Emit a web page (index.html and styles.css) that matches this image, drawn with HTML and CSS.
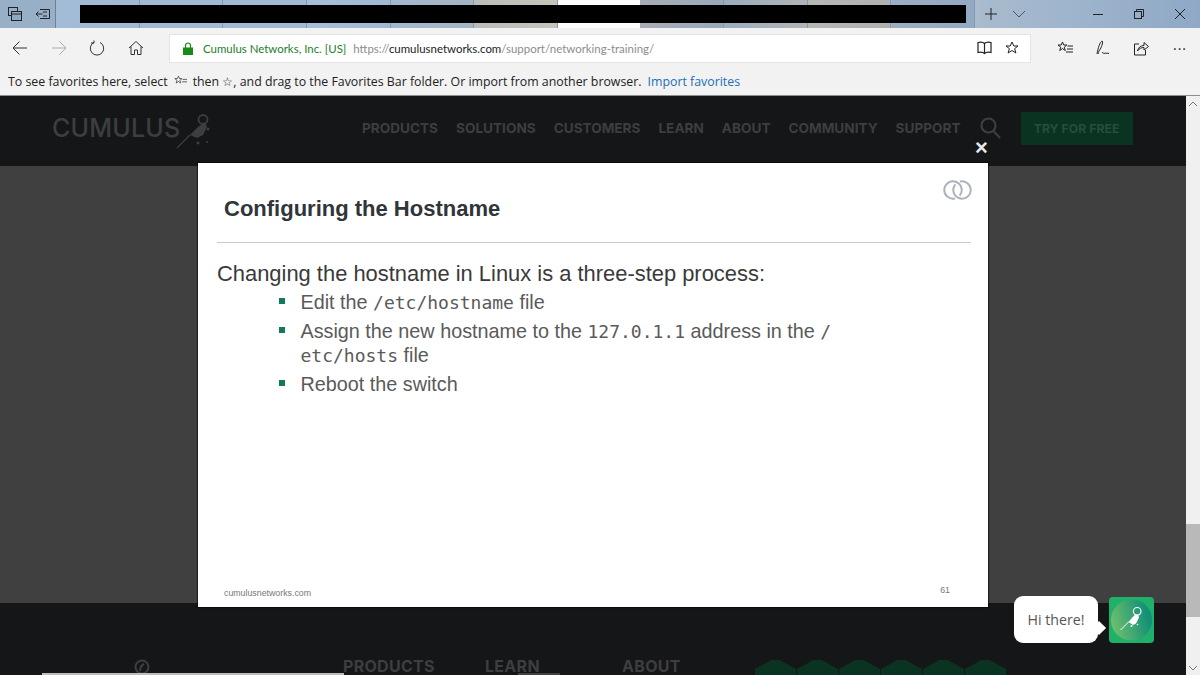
FILE: index.html
```html
<!DOCTYPE html>
<html lang="en">
<head>
    <meta charset="UTF-8">
    <title>Configuring the Hostname - Cumulus Networks</title>
    <link rel="stylesheet" href="styles.css">
</head>
<body>
    <div class="tabbar">
        <div class="tab-tools">
            <svg width="16" height="16" viewBox="0 0 16 16" fill="none" stroke="#222"><rect x="1.500" y="1.500" width="9" height="8"/><rect x="4.500" y="5.500" width="10" height="9" fill="#8fa9c4"/><path d="M4.500 8h10"/></svg>
            <svg width="16" height="16" viewBox="0 0 16 16" fill="none" stroke="#222"><path d="M5 3.500h9.500v9H5M7.500 8H1M3.500 5.500 1 8l2.500 2.500M8 6h4M8 10h4"/></svg>
        </div>
        <div class="tabs">
            <div class="tab t1"></div>
            <div class="tab t2"></div>
            <div class="tab t3"></div>
            <div class="tab t4"></div>
            <div class="tab t5"></div>
            <div class="tab t6"></div>
            <div class="tab t7"></div>
            <div class="tab t8"></div>
            <div class="tab t9"></div>
            <div class="tab t10"></div>
            <div class="tab t11"></div>
        </div>
        <div class="tab-end">
            <svg class="plus" width="14" height="14" viewBox="0 0 14 14" stroke="#222" fill="none"><path d="M7 1v12M1 7h12"/></svg>
            <svg class="chev" width="14" height="10" viewBox="0 0 14 10" stroke="#555" fill="none"><path d="M1 2l6 6 6-6"/></svg>
            <svg class="win-min" width="10" height="10" viewBox="0 0 10 10" stroke="#222" fill="none"><path d="M0 5.500h10"/></svg>
            <svg class="win-max" width="10" height="10" viewBox="0 0 10 10" stroke="#222" fill="none"><rect x="0.500" y="2.500" width="7" height="7"/><path d="M2.500 2.500v-2h7v7h-2"/></svg>
            <svg class="win-close" width="10" height="10" viewBox="0 0 10 10" stroke="#222" fill="none"><path d="M0 0l10 10M10 0L0 10"/></svg>
        </div>
        <div class="redact"></div>
    </div>

    <div class="toolbar">
        <svg class="nav-btn" width="16" height="16" viewBox="0 0 16 16" fill="none" stroke="#333"><path d="M15 8H1M7.500 1.500 1 8l6.500 6.500"/></svg>
        <svg class="nav-btn" width="16" height="16" viewBox="0 0 16 16" fill="none" stroke="#aaa"><path d="M1 8h14M8.500 1.500 15 8l-6.500 6.500"/></svg>
        <svg class="nav-btn" width="16" height="16" viewBox="0 0 16 16" fill="none" stroke="#333"><path d="M5 2.400A6.700 6.700 0 1 0 11 2.400M5 0.500v2.500H2"/></svg>
        <svg class="nav-btn home" width="16" height="16" viewBox="0 0 16 16" fill="none" stroke="#333"><path d="M1 8l7-6.500L15 8M3 6.500V14.500h3.500V10h3v4.500H13V6.500"/></svg>
        <div class="addressbar">
            <svg width="10" height="13" viewBox="0 0 10 13"><path d="M2.500 6V3.500a2.500 2.500 0 0 1 5 0V6" fill="none" stroke="#178a17" stroke-width="1.200"/><rect y="5.500" width="10" height="7.500" fill="#178a17"/></svg>
            <span class="cert">Cumulus Networks, Inc. [US]</span>
            <span class="url">https://<b>cumulusnetworks.com</b>/support/networking-training/</span>
            <svg class="book" width="15" height="14" viewBox="0 0 15 14" fill="none" stroke="#222" stroke-width="1.200"><path d="M7.500 2.500C6 1 3 1 1 1.500v10c2-.5 5-.5 6.500 1 1.500-1.500 4.500-1.500 6.500-1v-10c-2-.5-5-.5-6.500 1zM7.500 2.500v10"/></svg>
            <svg class="star" width="14" height="14" viewBox="0 0 14 14" fill="none" stroke="#222"><path d="M7 1l1.800 4h4.200l-3.400 2.700 1.300 4.300L7 9.500 3.100 12l1.300-4.300L1 5h4.200z"/></svg>
        </div>
        <div class="tools">
            <svg width="16" height="14" viewBox="0 0 16 14" fill="none" stroke="#222"><path d="M5.500 1l1.300 3h3l-2.500 2.200 1 3.300-2.800-1.900-2.800 1.900 1-3.300L1 4h3.200zM10.500 5H16M10 8h6M9 11h7"/></svg>
            <svg width="16" height="16" viewBox="0 0 16 16" fill="none" stroke="#222"><path d="M2 14C3 8 5 2 7 1c1.500 0 0 6-3 10-.5.800-1 2-.500 3M7 12c1.500 2.500 4 .5 7 1.500"/></svg>
            <svg width="16" height="15" viewBox="0 0 16 15" fill="none" stroke="#222"><path d="M6 3H1.500v11h11V9M4.500 10C5 6.500 8 4.500 11 4.500V1.500L15.500 5.500 11 9V6.500c-2.500 0-5 1-6.500 3.500z"/></svg>
            <span class="dots">···</span>
        </div>
    </div>

    <div class="favbar">
        <span>To see favorites here, select</span>
        <svg class="fav-a" width="13" height="12" viewBox="0 0 16 14" fill="none" stroke="#444"><path d="M5.500 1l1.300 3h3l-2.500 2.200 1 3.300-2.800-1.900-2.800 1.900 1-3.300L1 4h3.200zM10.500 5H16M10 8h6"/></svg>
        <span>then ☆, and drag to the Favorites Bar folder. Or import from another browser.</span>
        <a class="import">Import favorites</a>
    </div>

    <div class="page">
        <div class="site">
            <header class="site-header">
                <div class="logo">
                    <span>CUMULUS</span>
                    <svg width="38" height="40" viewBox="0 0 38 40" fill="none" stroke="#3d3e40"><circle cx="28" cy="7.500" r="4.500" stroke-width="1.800"/><path d="M2 36 15 23" stroke-width="1.200"/><path d="M15 23 23 15l7-5 2 5-4 8-6 3z" fill="#3d3e40" stroke="none"/><circle cx="33" cy="17" r="1.500" fill="#3d3e40" stroke="none"/><circle cx="23" cy="31" r="1.500" fill="#3d3e40" stroke="none"/><circle cx="32" cy="30" r="1" fill="#3d3e40" stroke="none"/></svg>
                </div>
                <nav class="main-nav">
                    <a>PRODUCTS</a>
                    <a>SOLUTIONS</a>
                    <a>CUSTOMERS</a>
                    <a>LEARN</a>
                    <a>ABOUT</a>
                    <a>COMMUNITY</a>
                    <a>SUPPORT</a>
                </nav>
                <svg class="search" width="21" height="22" viewBox="0 0 21 22" fill="none" stroke="#3d3e40" stroke-width="2.200"><circle cx="8.500" cy="8.500" r="7"/><path d="M13.500 14l6.500 7"/></svg>
                <a class="try-btn">TRY FOR FREE</a>
            </header>
            <div class="band"></div>
            <footer class="site-footer">
                <svg class="foot-logo" width="16" height="16" viewBox="0 0 16 16" fill="none" stroke="#3d3e40" stroke-width="2"><circle cx="8" cy="8" r="6.500"/><path d="M6 12c0-3 2-6 4-7" /></svg>
                <div class="foot-col c1">PRODUCTS</div>
                <div class="foot-col c2">LEARN</div>
                <div class="foot-col c3">ABOUT</div>
                <div class="badges">
                    <i></i><i></i><i></i><i></i><i></i><i></i>
                </div>
                <div class="foot-line"></div>
                <div class="foot-under"></div>
            </footer>
        </div>
        <div class="scrollbar">
            <svg class="arrow-up" width="10" height="6" viewBox="0 0 10 6" fill="none" stroke="#777"><path d="M1 5l4-4 4 4"/></svg>
            <div class="thumb"></div>
            <svg class="arrow-down" width="10" height="6" viewBox="0 0 10 6" fill="none" stroke="#777"><path d="M1 1l4 4 4-4"/></svg>
        </div>

        <span class="modal-close">×</span>
        <div class="slide">
            <svg class="slide-logo" width="29" height="22" viewBox="0 0 29 22" fill="none" stroke="#adb2bd" stroke-width="2"><path d="M12 19.470A8.700 8.700 0 1 1 16.600 16.670"/><path d="M17 2.530A8.700 8.700 0 1 1 12.400 5.330"/></svg>
            <h2>Configuring the Hostname</h2>
            <hr>
            <p class="lead">Changing the hostname in Linux is a three-step process:</p>
            <ul>
                <li>Edit the <code>/etc/hostname</code> file</li>
                <li>Assign the new hostname to the <code>127.0.1.1</code> address in the <code>/</code><br><code>etc/hosts</code> file</li>
                <li>Reboot the switch</li>
            </ul>
            <div class="slide-foot">
                <span>cumulusnetworks.com</span>
                <span class="slide-num">61</span>
            </div>
        </div>

        <div class="chat">
            <div class="bubble">Hi there!</div>
            <div class="chat-btn">
                <svg width="26" height="28" viewBox="0 0 26 28" fill="none" stroke="#fff"><circle cx="18.200" cy="5.300" r="3.800" stroke-width="1.200"/><path d="M1.500 24 10 15.500" stroke-width="1"/><path d="M9.500 16 15 9.500l4-1 1 3-3 6-3 1.500z" fill="#fff" stroke="none"/><circle cx="12.500" cy="20" r="1" fill="#fff" stroke="none"/><circle cx="18.500" cy="18.500" r="0.800" fill="#fff" stroke="none"/></svg>
            </div>
        </div>
    </div>
</body>
</html>
```

FILE: styles.css
```css
html, body {
    margin: 0;
    padding: 0;
}
body {
    width: 1200px;
    height: 675px;
    overflow: hidden;
    background: #f2f2f2;
    font-family: 'Open Sans', sans-serif;
    color: #222;
}

/* tab strip */
.tabbar {
    position: relative;
    display: flex;
    height: 28px;
    background: #98afc8;
}
.tab-tools {
    width: 56px;
    display: flex;
    align-items: center;
    gap: 12px;
    padding-left: 7px;
    box-sizing: border-box;
    border-right: 1px solid #6d8198;
}
.tabs {
    display: flex;
    width: 919px;
}
.tab {
    flex: 1;
    border-right: 1px solid #8499ae;
}
.t1 { background: linear-gradient(90deg, #a3bcd6, #9db9d7); }
.t2 { background: #a0bad6; }
.t3 { background: #a0bad6; }
.t4 { background: linear-gradient(90deg, #a6bfd9, #9fb8d4); }
.t5 { background: linear-gradient(90deg, #a2b8d0, #a6b4c2); }
.t6 { background: linear-gradient(90deg, #b9bdb9, #c6c5bb); }
.t7 { background: #fdfdfd; border-right: 0; }
.t8 { background: linear-gradient(90deg, #a7adb5, #98a8bb); }
.t9 { background: linear-gradient(90deg, #9cacbe, #b0b5b6); }
.t10 { background: linear-gradient(90deg, #b5b8b4, #aeb1ae); }
.t11 { background: linear-gradient(90deg, #9aaec4, #93a8c2); }
.tab-end {
    flex: 1;
    position: relative;
    display: flex;
    align-items: center;
    padding-left: 9px;
    background: linear-gradient(90deg, #a9bbcd, #9fb5cd 40%, #8ea8c6);
}
.chev { margin-left: 14px; }
.win-min { margin-left: 67px; }
.win-max { margin-left: 31px; }
.win-close { margin-left: 31px; }
.redact {
    position: absolute;
    left: 80px;
    top: 5px;
    width: 886px;
    height: 18px;
    background: #000;
}

/* address row */
.toolbar {
    height: 38px;
    display: flex;
    align-items: center;
    box-sizing: border-box;
    padding: 2px 0 0 12px;
}
.nav-btn { margin-right: 22.500px; }
.nav-btn.home { margin-right: 25.500px; }
.addressbar {
    width: 862px;
    height: 29px;
    box-sizing: border-box;
    display: flex;
    align-items: center;
    background: #fff;
    border: 1px solid #e4e4e4;
    padding-left: 13px;
    font-family: 'Lato', sans-serif;
    font-size: 11.450px;
}
.cert {
    color: #1d7d2a;
    margin-left: 10px;
}
.url {
    color: #8c8c8c;
    margin-left: 7px;
    flex: 1;
}
.url b {
    color: #222;
    font-weight: 400;
}
.star { margin: 0 11px 0 13px; }
.tools {
    flex: 1;
    display: flex;
    align-items: center;
    gap: 22px;
    padding-left: 26px;
}
.dots {
    font-size: 14px;
    letter-spacing: 1px;
    margin-left: 2px;
}

/* favorites row */
.favbar {
    height: 29px;
    display: flex;
    align-items: center;
    gap: 6px;
    padding: 1px 0 0 8px;
    box-sizing: border-box;
    font-size: 12.350px;
    color: #222;
    white-space: nowrap;
}
.import { color: #1a6fb5; }

/* site behind the dim layer */
.page {
    position: relative;
    display: flex;
    height: 580px;
    border-top: 1px solid #8d8d8d;
    box-sizing: border-box;
}
.site {
    flex: 1;
    display: flex;
    flex-direction: column;
    font-family: 'Inter', sans-serif;
}
.site-header {
    height: 70px;
    box-sizing: border-box;
    display: flex;
    align-items: center;
    background: #151618;
    padding: 0 0 6px 52px;
    color: #3d3e40;
}
.logo {
    width: 310px;
    display: flex;
    align-items: center;
    font-size: 25px;
    font-weight: 500;
    letter-spacing: 0.200px;
}
.logo svg {
    margin: 8px 0 0 -5px;
}
.main-nav {
    display: flex;
    gap: 18px;
    font-size: 13.600px;
    font-weight: 700;
}
.search { margin-left: 19px; }
.try-btn {
    margin-left: 20px;
    width: 112px;
    height: 33px;
    line-height: 33px;
    text-align: center;
    background: #0b3322;
    color: #21503b;
    font-size: 12.300px;
    font-weight: 700;
}
.band {
    height: 437px;
    background: #404040;
}
.site-footer {
    position: relative;
    flex: 1;
    background: #151618;
    color: #3d3e40;
    font-size: 16px;
    font-weight: 700;
    letter-spacing: 0.300px;
}
.foot-logo {
    position: absolute;
    left: 134px;
    top: 56px;
}
.foot-col {
    position: absolute;
    top: 53px;
}
.c1 { left: 343px; }
.c2 { left: 485px; }
.c3 { left: 622px; }
.badges {
    position: absolute;
    left: 755px;
    top: 57px;
    display: flex;
    gap: 1px;
}
.badges i {
    width: 41px;
    height: 30px;
    background: #0b3322;
    clip-path: polygon(40% 0, 60% 0, 100% 30%, 100% 100%, 0 100%, 0 30%);
}
.foot-line {
    position: absolute;
    left: 42px;
    top: 70px;
    width: 302px;
    height: 2px;
    background: #bdbdbd;
}
.foot-under {
    position: absolute;
    left: 518px;
    top: 70px;
    width: 42px;
    height: 2px;
    background: #404040;
}

/* scrollbar */
.scrollbar {
    position: relative;
    width: 14px;
    background: #f0f0f0;
}
.thumb {
    position: absolute;
    top: 428px;
    left: 0;
    right: 0;
    height: 93px;
    background: #b9b9b9;
}
.arrow-up {
    position: absolute;
    top: 5px;
    left: 2px;
}
.arrow-down {
    position: absolute;
    bottom: 4px;
    left: 2px;
}

/* slide modal */
.modal-close {
    position: absolute;
    left: 975px;
    top: 37px;
    color: #e8e8e8;
    font-family: 'Liberation Sans', sans-serif;
    font-size: 22px;
    font-weight: 700;
    line-height: 30px;
}
.slide {
    position: absolute;
    left: 198px;
    top: 67px;
    width: 790px;
    height: 444px;
    box-sizing: border-box;
    background: #fff;
    padding: 33px 17px 0 19px;
    font-family: 'Liberation Sans', sans-serif;
    box-shadow: 0 0 1px 1px rgba(0, 0, 0, 0.5);
}
.slide-logo {
    position: absolute;
    top: 16px;
    right: 16px;
}
.slide h2 {
    margin: 0 0 0 7px;
    font-size: 22px;
    line-height: 26px;
    font-weight: 700;
    color: #30353a;
}
.slide hr {
    margin: 20px 0 16px;
    border: 0;
    border-top: 1px solid #c9c9c9;
}
.lead {
    margin: 0 0 -4px;
    font-size: 21.920px;
    line-height: 30px;
    color: #3a3a3a;
}
.slide ul {
    list-style: none;
    margin: 0;
    padding: 0 0 0 83.500px;
    font-size: 19.800px;
    color: #5a5a5a;
}
.slide li {
    position: relative;
    line-height: 24px;
    margin-top: 5px;
}
.slide li::before {
    content: '';
    position: absolute;
    left: -22px;
    top: 8px;
    width: 6px;
    height: 6px;
    background: #127a5c;
}
.slide code {
    font-family: 'DejaVu Sans Mono', monospace;
    font-size: 18px;
    line-height: 0;
}
.slide-foot {
    position: absolute;
    left: 26px;
    right: 38px;
    bottom: 9px;
    display: flex;
    justify-content: space-between;
    font-size: 8.800px;
    color: #777;
}
.slide-num { position: relative; top: -3px; }

/* chat widget */
.chat {
    position: absolute;
    left: 1014px;
    top: 500px;
    display: flex;
    gap: 11px;
    align-items: flex-start;
}
.bubble {
    position: relative;
    width: 84px;
    height: 47px;
    line-height: 47px;
    text-align: center;
    background: #fff;
    border-radius: 9px;
    font-size: 14.200px;
    color: #555;
}
.bubble::after {
    content: '';
    position: absolute;
    right: -6px;
    top: 27px;
    width: 10px;
    height: 10px;
    background: #fff;
    transform: rotate(45deg);
}
.chat-btn {
    width: 45px;
    height: 46px;
    margin-top: 1px;
    display: flex;
    align-items: center;
    justify-content: center;
    border-radius: 4px;
    background: radial-gradient(circle at 50% 50%, transparent 0 20px, #1fb069 21px), linear-gradient(75deg, #7fc96a, #149078 80%);
}
```
